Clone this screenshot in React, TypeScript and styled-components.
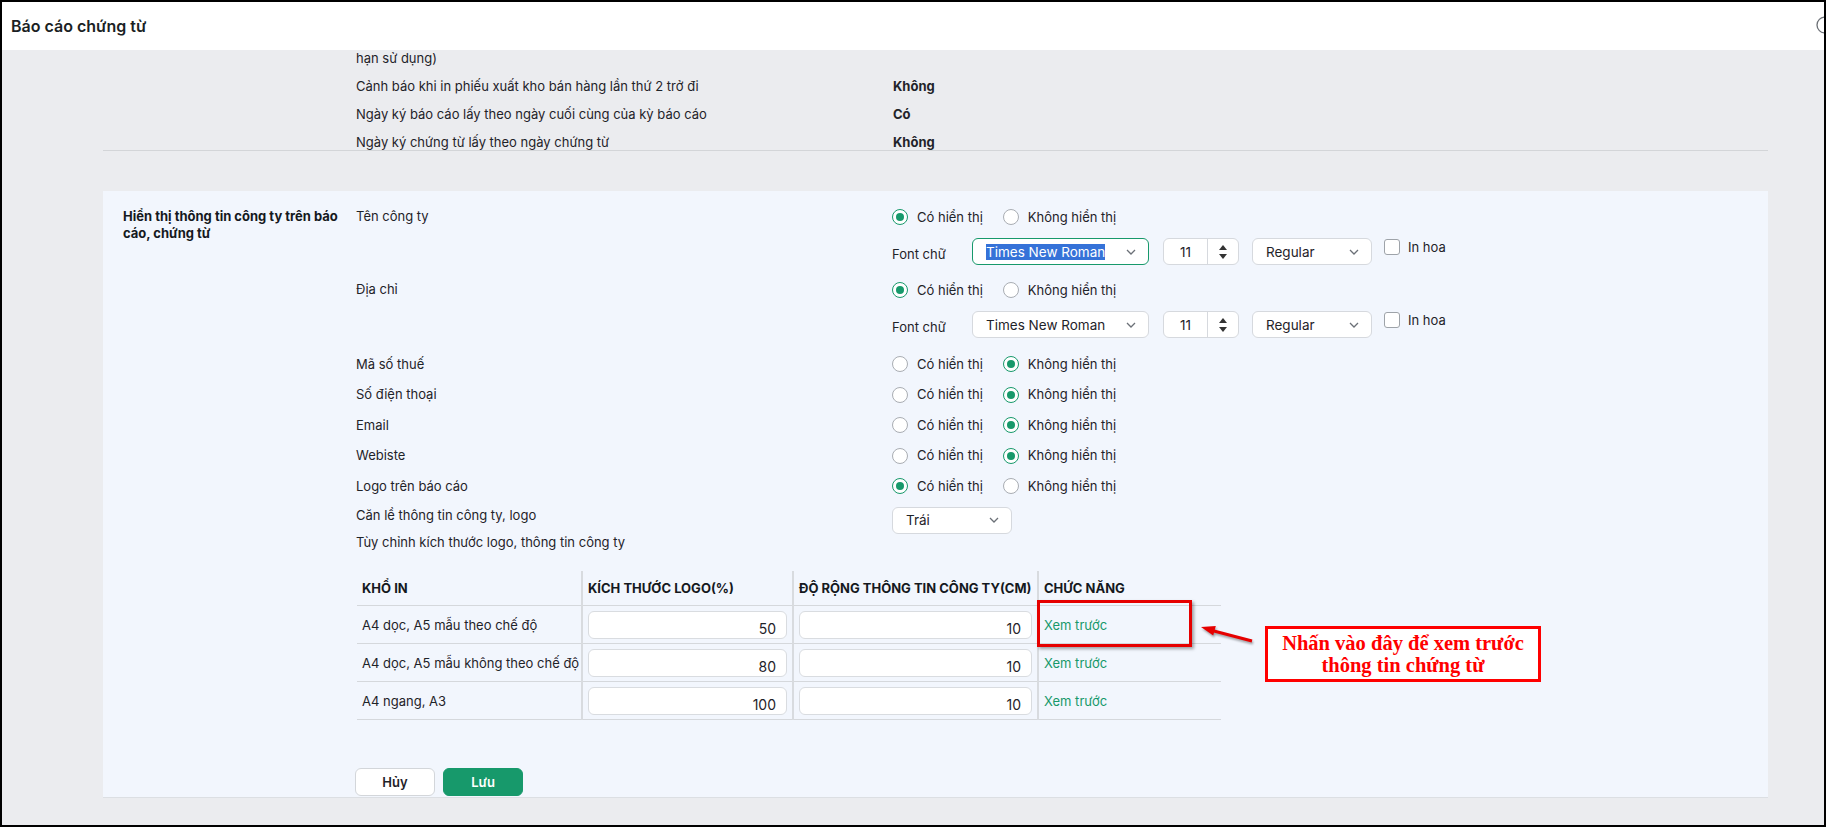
import React from 'react';
import styled, { createGlobalStyle } from 'styled-components';

const GlobalStyle = createGlobalStyle`
	html, body {
		margin: 0;
		padding: 0;
	}
	body {
		font-family: Inter, "Noto Sans", sans-serif;
		font-size: 13px;
		color: #1f2329;
	}
	* {
		box-sizing: border-box;
	}
`

const GREEN = '#17996b'

const Frame = styled.div`
	width: 1826px;
	height: 827px;
	border: 2px solid #000;
	display: flex;
	flex-direction: column;
	overflow: hidden;
	background: #ebecef;
`
const Header = styled.header`
	flex: none;
	height: 48px;
	background: #fff;
	display: flex;
	align-items: center;
	justify-content: space-between;
	padding-left: 9px;
	overflow: hidden;
`
const Title = styled.h1`
	margin: 0;
	font-size: 16px;
	font-weight: 600;
	color: #1b1f24;
`
const CloseIcon = styled.svg`
	flex: none;
	margin-right: -10px;
	margin-top: -2px;
`
const Body = styled.main`
	flex: 1;
	padding: 0 56px 0 101px;
	overflow: hidden;
`
const TopBlock = styled.section`
	display: flex;
	flex-direction: column;
	gap: 12px;
	padding-left: 253px;
	border-bottom: 1px solid #d3d5d8;
`
const InfoRow = styled.div`
	display: grid;
	grid-template-columns: 537px 1fr;
	line-height: 16px;
`
const InfoValue = styled.span`
	font-weight: 700;
`
const Panel = styled.section`
	margin-top: 40px;
	display: grid;
	grid-template-columns: 233px 1fr;
	padding: 17px 0 1px 20px;
	background: #f2f6fd;
	border-bottom: 1px solid #dcdfe3;
`
const SectionTitle = styled.div`
	font-weight: 700;
	line-height: 17px;
	padding-right: 8px;
	color: #15191e;
`
const Content = styled.div`
	display: flex;
	flex-direction: column;
`
const SettingRow = styled.div<{ $mt?: number; $h?: string; $center?: boolean }>`
	display: grid;
	grid-template-columns: 536px auto;
	align-items: ${({ $center }) => ($center ? 'center' : 'start')};
	margin-top: ${({ $mt }) => $mt || 0}px;
	height: ${({ $h }) => $h || 'auto'};
`
const RowLabel = styled.div`
	line-height: 17px;
`
const ControlStack = styled.div`
	display: flex;
	flex-direction: column;
	gap: 12px;
`
const RadioGroup = styled.div`
	display: flex;
	align-items: center;
	gap: 20px;
	height: 18px;
`
const RadioOption = styled.label`
	display: inline-flex;
	align-items: center;
	gap: 9px;
	line-height: 17px;
`
const RadioDot = styled.span<{ $checked?: boolean }>`
	width: 16px;
	height: 16px;
	border-radius: 50%;
	border: ${({ $checked }) => ($checked ? `1.5px solid ${GREEN}` : '1px solid #a9adb3')};
	background: #fff;
	display: inline-flex;
	align-items: center;
	justify-content: center;
	&::after {
		content: '';
		width: 8px;
		height: 8px;
		border-radius: 50%;
		background: ${({ $checked }) => ($checked ? GREEN : 'transparent')};
	}
`
const FontRow = styled.div`
	display: flex;
	align-items: flex-start;
	height: 27px;
`
const FontLabel = styled.span`
	width: 80px;
	line-height: 27px;
	padding-top: 3px;
`
const SelectBox = styled.div<{ $w: number; $focus?: boolean; $ml?: number }>`
	width: ${({ $w }) => $w}px;
	height: 27px;
	margin-left: ${({ $ml }) => $ml || 0}px;
	background: #fff;
	border: 1px solid ${({ $focus }) => ($focus ? GREEN : '#d6d9de')};
	border-radius: 6px;
	display: flex;
	align-items: center;
	justify-content: space-between;
	padding: 0 11px 0 13px;
	font-size: 13.5px;
	color: #1f2329;
`
const Selected = styled.span`
	background: #3572d8;
	color: #fff;
`
const Spinner = styled.div`
	width: 76px;
	height: 27px;
	margin-left: 14px;
	background: #fff;
	border: 1px solid #d6d9de;
	border-radius: 6px;
	display: flex;
`
const SpinValue = styled.span`
	flex: 1;
	display: flex;
	align-items: center;
	justify-content: center;
	font-size: 13.5px;
`
const SpinArrows = styled.span`
	width: 31px;
	border-left: 1px solid #d6d9de;
	display: flex;
	flex-direction: column;
	align-items: center;
	justify-content: center;
	gap: 4px;
`
const Tri = styled.span<{ $down?: boolean }>`
	width: 0;
	height: 0;
	border-left: 4px solid transparent;
	border-right: 4px solid transparent;
	${({ $down }) => ($down ? 'border-top: 5px solid #333;' : 'border-bottom: 5px solid #333;')}
`
const CheckLabel = styled.label`
	display: inline-flex;
	align-items: center;
	gap: 8px;
	margin: 1px 0 0 12px;
	line-height: 16px;
`
const CheckBox = styled.span`
	width: 16px;
	height: 16px;
	border: 1px solid #9ea3a9;
	border-radius: 3px;
	background: #fff;
`
const TableWrap = styled.div`
	position: relative;
	margin-top: 20px;
	width: 866px;
`
const Table = styled.table`
	border-collapse: collapse;
	table-layout: fixed;
	width: 864px;
	margin-left: 1px;
	th, td {
		border-bottom: 1px solid #d5d8dc;
		padding: 0 5px;
		text-align: left;
		white-space: nowrap;
	}
	th:not(:last-child), td:not(:last-child) {
		border-right: 2px solid #d8dbdf;
	}
	th {
		height: 35px;
		font-weight: 700;
		font-size: 13px;
		color: #15191e;
	}
	td {
		height: 38px;
	}
`
const NumInput = styled.input`
	width: 100%;
	height: 28px;
	border: 1px solid #d9dce0;
	border-radius: 6px;
	background: #fff;
	text-align: right;
	padding: 7px 10px 0;
	font-family: Inter, sans-serif;
	font-size: 14px;
	color: #1f2329;
	outline: none;
`
const PreviewLink = styled.a`
	color: ${GREEN};
	text-decoration: none;
`
const Highlight = styled.div`
	position: absolute;
	left: 681px;
	top: 29px;
	width: 155px;
	height: 47px;
	border: 3px solid #e60000;
	box-shadow: 2px 2px 3px rgba(0, 0, 0, 0.35);
	pointer-events: none;
`
const Arrow = styled.svg`
	position: absolute;
	left: 840px;
	top: 50px;
	filter: drop-shadow(1px 2px 1px rgba(0, 0, 0, 0.35));
`
const Callout = styled.div`
	position: absolute;
	left: 909px;
	top: 55px;
	width: 276px;
	height: 56px;
	border: 3px solid #f00;
	background: #fff;
	padding-top: 3px;
	text-align: center;
	font-family: "Liberation Serif", "Times New Roman", serif;
	font-weight: 700;
	font-size: 20.5px;
	line-height: 22px;
	color: #f00;
	white-space: nowrap;
`
const ButtonRow = styled.div`
	display: flex;
	gap: 8px;
	margin-top: 48px;
	margin-left: -1px;
`
const Button = styled.button<{ $primary?: boolean }>`
	width: 80px;
	height: 28px;
	border-radius: 6px;
	border: 1px solid ${({ $primary }) => ($primary ? GREEN : '#d3d6da')};
	background: ${({ $primary }) => ($primary ? GREEN : '#fff')};
	color: ${({ $primary }) => ($primary ? '#fff' : '#1f2329')};
	font-family: Inter, sans-serif;
	font-size: 13px;
	font-weight: 600;
`

const Chevron = () => (
	<svg width="12" height="8" viewBox="0 0 12 8">
		<polyline points="2,2 6,6 10,2" fill="none" stroke="#6b7077" strokeWidth="1.3" />
	</svg>
)

const Radios = ({ on }: { on: boolean }) => (
	<RadioGroup>
		<RadioOption><RadioDot $checked={on} />Có hiển thị</RadioOption>
		<RadioOption><RadioDot $checked={!on} />Không hiển thị</RadioOption>
	</RadioGroup>
)

const FontPicker = ({ focus }: { focus?: boolean }) => (
	<FontRow>
		<FontLabel>Font chữ</FontLabel>
		<SelectBox $w={177} $focus={focus}>
			{focus ? <Selected>Times New Roman</Selected> : <span>Times New Roman</span>}
			<Chevron />
		</SelectBox>
		<Spinner>
			<SpinValue>11</SpinValue>
			<SpinArrows><Tri /><Tri $down /></SpinArrows>
		</Spinner>
		<SelectBox $w={120} $ml={13}>
			<span>Regular</span>
			<Chevron />
		</SelectBox>
		<CheckLabel><CheckBox />In hoa</CheckLabel>
	</FontRow>
)

const App = () => {
	const topRows = [
		{ label: 'hạn sử dụng)', value: '' },
		{ label: 'Cảnh báo khi in phiếu xuất kho bán hàng lần thứ 2 trở đi', value: 'Không' },
		{ label: 'Ngày ký báo cáo lấy theo ngày cuối cùng của kỳ báo cáo', value: 'Có' },
		{ label: 'Ngày ký chứng từ lấy theo ngày chứng từ', value: 'Không' },
	]
	const simpleRows = [
		{ label: 'Mã số thuế', on: false },
		{ label: 'Số điện thoại', on: false },
		{ label: 'Email', on: false },
		{ label: 'Webiste', on: false },
		{ label: 'Logo trên báo cáo', on: true },
	]
	const sizes = [
		{ name: 'A4 dọc, A5 mẫu theo chế độ', logo: '50', width: '10' },
		{ name: 'A4 dọc, A5 mẫu không theo chế độ', logo: '80', width: '10' },
		{ name: 'A4 ngang, A3', logo: '100', width: '10' },
	]

	return (
		<Frame>
			<GlobalStyle />
			<Header>
				<Title>Báo cáo chứng từ</Title>
				<CloseIcon width="18" height="18" viewBox="0 0 18 18">
					<circle cx="9" cy="9" r="8" fill="none" stroke="#6b6f75" strokeWidth="1.3" />
				</CloseIcon>
			</Header>
			<Body>
				<TopBlock>
					{topRows.map((r, i) => (
						<InfoRow key={i}>
							<span>{r.label}</span>
							<InfoValue>{r.value}</InfoValue>
						</InfoRow>
					))}
				</TopBlock>

				<Panel>
					<SectionTitle>Hiển thị thông tin công ty trên báo cáo, chứng từ</SectionTitle>
					<Content>
						<SettingRow>
							<RowLabel>Tên công ty</RowLabel>
							<ControlStack>
								<Radios on />
								<FontPicker focus />
							</ControlStack>
						</SettingRow>
						<SettingRow $mt={16}>
							<RowLabel>Địa chỉ</RowLabel>
							<ControlStack>
								<Radios on />
								<FontPicker />
							</ControlStack>
						</SettingRow>
						{simpleRows.map((r, i) => (
							<SettingRow key={i} $mt={i === 0 ? 11 : 0} $h="30.5px" $center>
								<RowLabel>{r.label}</RowLabel>
								<Radios on={r.on} />
							</SettingRow>
						))}
						<SettingRow $mt={5}>
							<RowLabel>Căn lề thông tin công ty, logo</RowLabel>
							<SelectBox $w={120}>
								<span>Trái</span>
								<Chevron />
							</SelectBox>
						</SettingRow>
						<SettingRow>
							<RowLabel>Tùy chỉnh kích thước logo, thông tin công ty</RowLabel>
						</SettingRow>

						<TableWrap>
							<Table>
								<colgroup>
									<col style={{ width: 225 }} />
									<col style={{ width: 211 }} />
									<col style={{ width: 245 }} />
									<col style={{ width: 183 }} />
								</colgroup>
								<thead>
									<tr>
										<th>KHỔ IN</th>
										<th>KÍCH THƯỚC LOGO(%)</th>
										<th>ĐỘ RỘNG THÔNG TIN CÔNG TY(CM)</th>
										<th>CHỨC NĂNG</th>
									</tr>
								</thead>
								<tbody>
									{sizes.map((s, i) => (
										<tr key={i}>
											<td>{s.name}</td>
											<td><NumInput defaultValue={s.logo} /></td>
											<td><NumInput defaultValue={s.width} /></td>
											<td><PreviewLink href="#">Xem trước</PreviewLink></td>
										</tr>
									))}
								</tbody>
							</Table>
							<Highlight />
							<Arrow width="62" height="26" viewBox="0 0 62 26">
								<line x1="56" y1="20" x2="16" y2="9.5" stroke="#e60000" strokeWidth="3" />
								<polygon points="5,6 17.2,14.5 19.8,4.9" fill="#e60000" />
							</Arrow>
							<Callout>
								Nhấn vào đây để xem trước
								<br />
								thông tin chứng từ
							</Callout>
						</TableWrap>

						<ButtonRow>
							<Button>Hủy</Button>
							<Button $primary>Lưu</Button>
						</ButtonRow>
					</Content>
				</Panel>
			</Body>
		</Frame>
	)
}

export default App
